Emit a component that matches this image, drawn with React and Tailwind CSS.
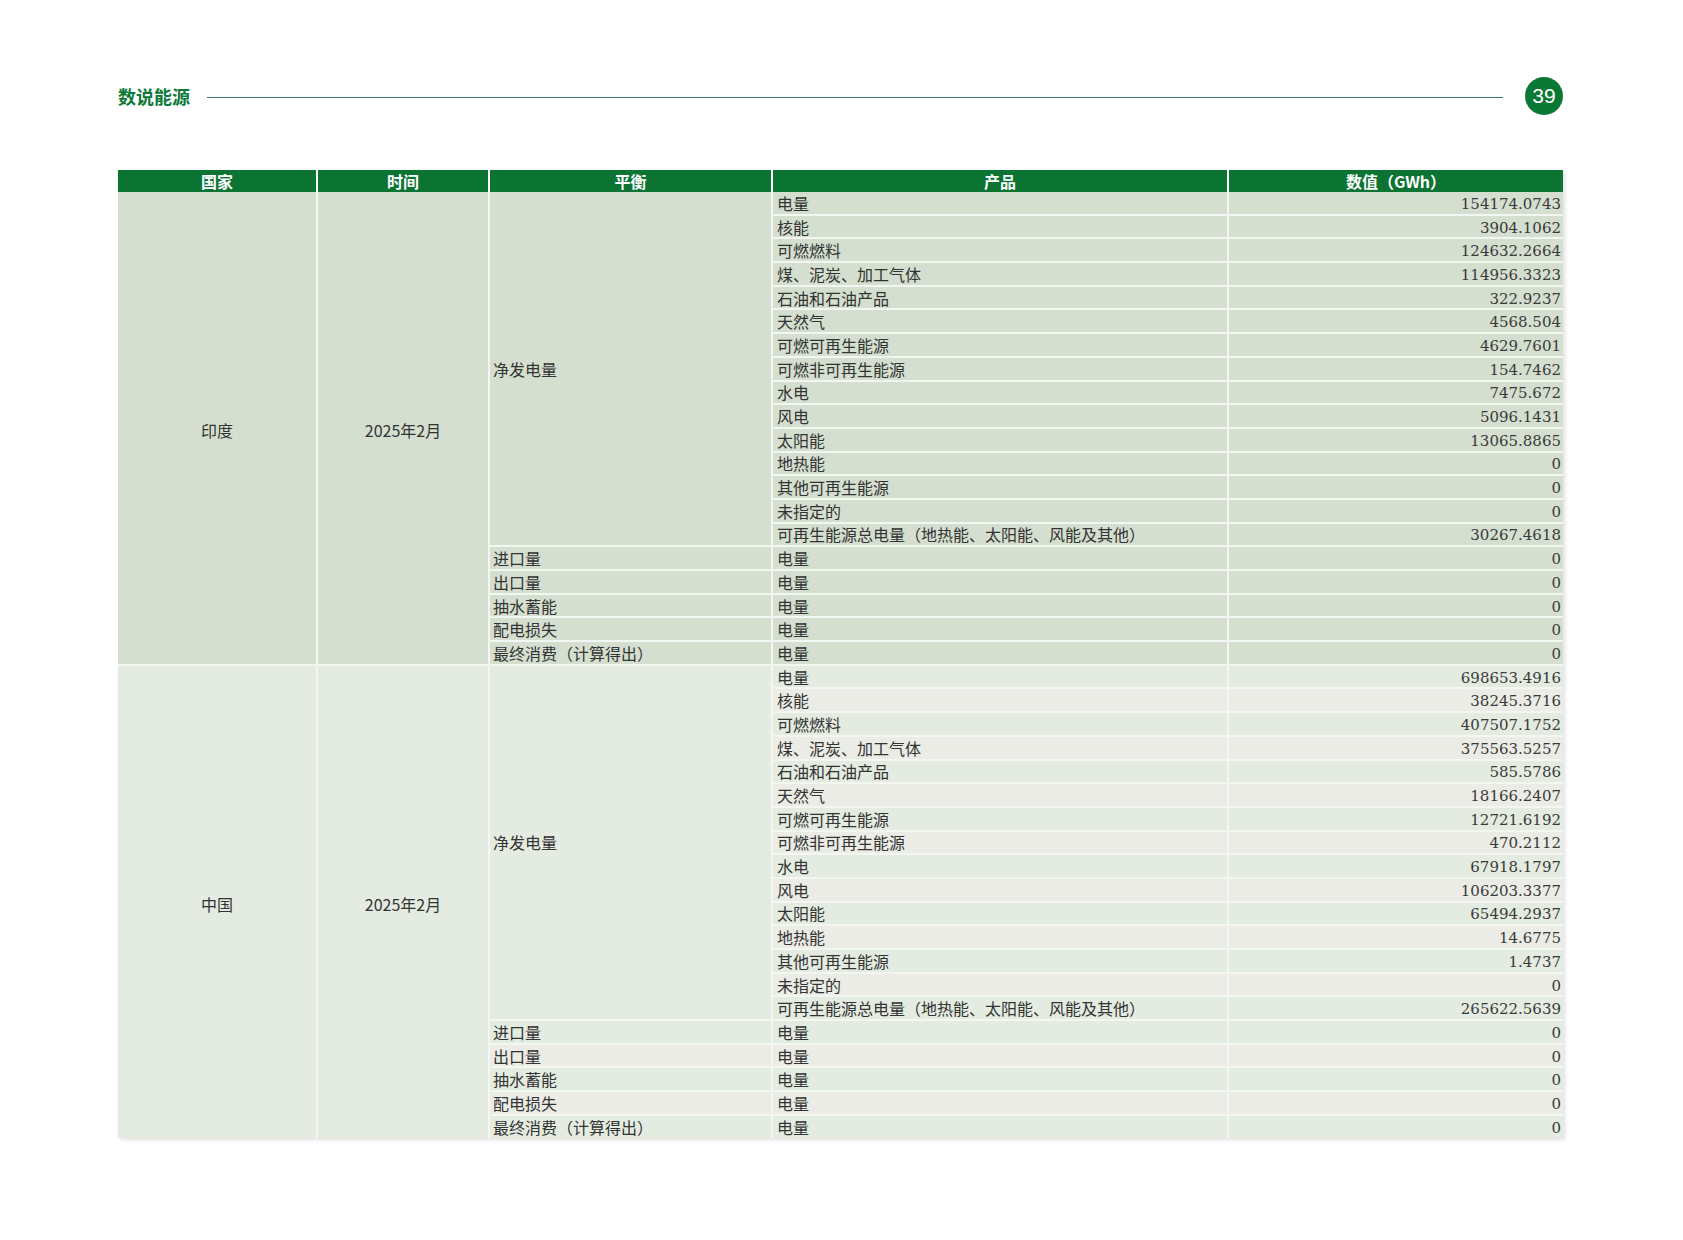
import React from 'react';

const cjk = "font-['Noto_Sans_CJK_SC','Noto_Sans',sans-serif]";
const num = "font-['DejaVu_Serif','Liberation_Serif',serif]";

const products = [
  '电量',
  '核能',
  '可燃燃料',
  '煤、泥炭、加工气体',
  '石油和石油产品',
  '天然气',
  '可燃可再生能源',
  '可燃非可再生能源',
  '水电',
  '风电',
  '太阳能',
  '地热能',
  '其他可再生能源',
  '未指定的',
  '可再生能源总电量（地热能、太阳能、风能及其他）',
];

const flows = ['进口量', '出口量', '抽水蓄能', '配电损失', '最终消费（计算得出）'];

const countries = [
  {
    name: '印度',
    values: [
      '154174.0743', '3904.1062', '124632.2664', '114956.3323', '322.9237',
      '4568.504', '4629.7601', '154.7462', '7475.672', '5096.1431',
      '13065.8865', '0', '0', '0', '30267.4618',
    ],
    light: false,
  },
  {
    name: '中国',
    values: [
      '698653.4916', '38245.3716', '407507.1752', '375563.5257', '585.5786',
      '18166.2407', '12721.6192', '470.2112', '67918.1797', '106203.3377',
      '65494.2937', '14.6775', '1.4737', '0', '265622.5639',
    ],
    light: true,
  },
];

// india rows are flat, china rows alternate green / beige
const rowBg = (light, i) => {
  if (!light) return 'bg-[#d5dfcf]';
  const beige = i < 15 ? i % 2 === 1 : i % 2 === 0;
  return beige ? 'bg-[#ebece5]' : 'bg-[#e4ece1]';
};

const Country = ({ c }) => {
  const base = c.light ? 'bg-[#e4ece1]' : 'bg-[#d5dfcf]';
  return (
    <>
      <div className={`row-[span_20/span_20] flex items-center justify-center pt-[4px] ${cjk} ${base}`}>
        {c.name}
      </div>
      <div className={`row-[span_20/span_20] flex items-center justify-center pt-[4px] ${cjk} ${base}`}>
        2025年2月
      </div>
      <div className={`row-[span_15/span_15] flex items-center pl-[3px] ${cjk} ${base}`}>
        净发电量
      </div>
      {products.map((p, i) => (
        <React.Fragment key={p}>
          <div className={`flex items-center pl-[4px] whitespace-nowrap ${cjk} ${rowBg(c.light, i)}`}>
            {p}
          </div>
          <div className={`flex items-center justify-end pr-[2px] pt-[3px] text-[15px] text-[#3a3a3a] ${num} ${rowBg(c.light, i)}`}>
            {c.values[i]}
          </div>
        </React.Fragment>
      ))}
      {flows.map((f, j) => (
        <React.Fragment key={f}>
          <div className={`flex items-center pl-[3px] whitespace-nowrap ${cjk} ${rowBg(c.light, 15 + j)}`}>
            {f}
          </div>
          <div className={`flex items-center pl-[4px] ${cjk} ${rowBg(c.light, 15 + j)}`}>
            电量
          </div>
          <div className={`flex items-center justify-end pr-[2px] pt-[3px] text-[15px] text-[#3a3a3a] ${num} ${rowBg(c.light, 15 + j)}`}>
            0
          </div>
        </React.Fragment>
      ))}
    </>
  );
};

export default function App() {
  return (
    <div className="w-[1683px] h-[1240px] bg-white pl-[118px] pt-[77px]">
      <div className="w-[1445px] flex items-center h-[38px]">
        <div className={`text-[18px] font-bold text-[#0e7a3a] leading-none ${cjk}`}>
          数说能源
        </div>
        <div className="flex-1 h-px bg-[#3a7d62] ml-[17px] mr-[22px] mt-[2px]" />
        <div className="w-[38px] h-[38px] rounded-full bg-[#0b7734] text-white flex items-center justify-center text-[21px] font-['Liberation_Sans',Arial,sans-serif]">
          39
        </div>
      </div>

      <div className="mt-[55px] w-[1445px] shadow-[2px_2px_4px_rgba(0,0,0,0.12)]">
        <div className="grid grid-cols-[198px_170px_281px_454px_334px] gap-x-[2px] bg-white h-[22px]">
          {['国家', '时间', '平衡', '产品', '数值（GWh）'].map((h) => (
            <div
              key={h}
              className={`bg-[#0b7433] text-white font-bold text-[16px] flex items-center justify-center leading-none ${cjk}`}
            >
              {h}
            </div>
          ))}
        </div>
        <div className="grid grid-cols-[198px_170px_281px_454px_334px] grid-rows-[repeat(40,21.7px)] gap-[2px] bg-[#f4f7f1] text-[16px] text-[#333] leading-none">
          {countries.map((c) => (
            <Country key={c.name} c={c} />
          ))}
        </div>
      </div>
    </div>
  );
}
